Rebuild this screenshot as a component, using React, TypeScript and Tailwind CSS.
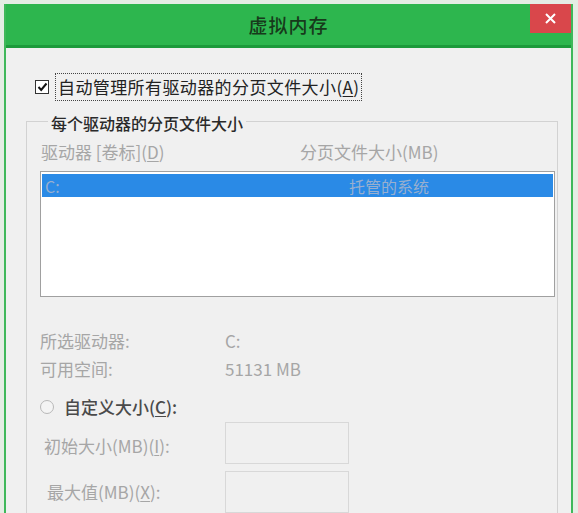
import React from "react";

const Mn = ({ c }: { c: string }) => <span className="underline underline-offset-2">{c}</span>;

export default function App() {
  return (
    <div className="w-[578px] h-[513px] overflow-hidden bg-[#e4ede4] pt-[4px] pl-[4px] pr-[5px] font-['Noto_Sans_CJK_SC',sans-serif]">
      <div className="h-[600px] border-x-2 border-[#3fb85a] bg-[#f0f0f0] flex flex-col">
        {/* title bar */}
        <div className="relative h-[44px] shrink-0 bg-[#2db64e] border-b-[3px] border-[#1c9a3b] flex items-center justify-center">
          <span className="text-[19px] leading-none font-medium text-[#173a1b] tracking-[1px]">虚拟内存</span>
          <div className="absolute right-0 top-0 w-[41px] h-[29px] bg-[#d9474b] flex items-center justify-center">
            <svg width="11" height="11" viewBox="0 0 11 11">
              <path d="M1 1 L10 10 M10 1 L1 10" stroke="#fff" strokeWidth="2" />
            </svg>
          </div>
        </div>

        {/* auto manage checkbox */}
        <div className="mt-[25px] pl-[29px] flex items-center h-[28px]">
          <div className="w-[14px] h-[14px] border border-[#333] bg-white flex items-center justify-center">
            <svg width="11" height="10" viewBox="0 0 11 10">
              <path d="M1.5 5 L4.2 8 L9.5 1.5" stroke="#111" strokeWidth="2" fill="none" />
            </svg>
          </div>
          <div className="ml-[6px] h-[28px] px-[2px] border border-dotted border-[#444] flex items-center text-[17px] tracking-[0.4px] text-[#222]">
            自动管理所有驱动器的分页文件大小(<Mn c="A" />)
          </div>
        </div>

        {/* group box */}
        <fieldset className="mt-[11px] ml-[20px] mr-[13px] border border-[#d2d2d2] p-0 pl-[13px] pr-[2px] min-w-0">
          <legend className="ml-[8px] px-[3px] pt-[3px] leading-[16px] text-[16px] font-medium text-[#2a2a2a]">每个驱动器的分页文件大小</legend>

          <div className="mt-[11px] flex text-[17px] leading-[20px] text-[#a6a6a6]">
            <div className="w-[260px] pl-[1px]">
              驱动器 [卷标](<Mn c="D" />)
            </div>
            <div>分页文件大小(MB)</div>
          </div>

          <div className="mt-[9px] h-[126px] border border-[#a0a0a0] bg-white p-[1px] pt-[2px]">
            <div className="h-[23px] bg-[#2a8ae6] flex items-center text-[16px] text-[#98afcf]">
              <div className="w-[307px] pl-[3px]">C:</div>
              <div>托管的系统</div>
            </div>
          </div>

          <div className="mt-[30px] grid grid-cols-[185px_1fr] text-[17px] leading-[28px] text-[#a6a6a6]">
            <div>所选驱动器:</div>
            <div>C:</div>
            <div>可用空间:</div>
            <div>51131 MB</div>
          </div>

          <div className="mt-[10px] h-[28px] flex items-center">
            <div className="w-[14px] h-[14px] rounded-full border border-[#b8b8b8] bg-[#f4f4f4]" />
            <span className="ml-[10px] text-[17px] font-medium text-[#4a4a4a]">
              自定义大小(<Mn c="C" />):
            </span>
          </div>

          <div className="mt-[1px] flex items-center">
            <div className="w-[185px] pl-[4px] pt-[6px] text-[17px] text-[#a6a6a6]">
              初始大小(MB)(<Mn c="I" />):
            </div>
            <div className="w-[124px] h-[42px] border border-[#d8d8d8] bg-[#f0f0f0]" />
          </div>

          <div className="mt-[7px] flex items-center">
            <div className="w-[185px] pl-[7px] text-[17px] text-[#a6a6a6]">
              最大值(MB)(<Mn c="X" />):
            </div>
            <div className="w-[124px] h-[42px] border border-[#d8d8d8] bg-[#f0f0f0]" />
          </div>

          <div className="h-[40px]" />
        </fieldset>
      </div>
    </div>
  );
}
